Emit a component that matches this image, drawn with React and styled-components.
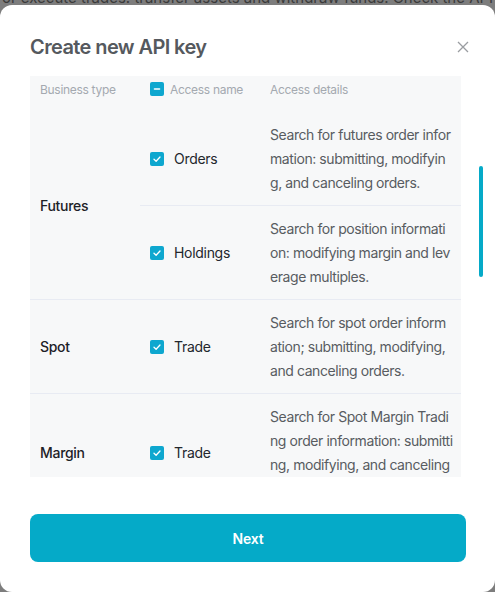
import React from "react";
import styled, { createGlobalStyle } from "styled-components";

const Global = createGlobalStyle`
  html, body { margin: 0; padding: 0; }
  body { font-family: Inter, "Noto Sans", sans-serif; -webkit-font-smoothing: antialiased; }
  * { box-sizing: border-box; }
`;

const Page = styled.div`
  position: relative;
  width: 495px;
  height: 592px;
  overflow: hidden;
  background: #7d7d7d;
`;

const BackdropText = styled.p`
  margin: 0;
  margin-top: -11px;
  padding: 0 0 0 2px;
  white-space: nowrap;
  font-size: 15px;
  line-height: 18px;
  color: #3a3a3a;
`;

const Modal = styled.div`
  position: absolute;
  top: 5px;
  left: 0;
  width: 495px;
  height: 587px;
  background: #fff;
  border-radius: 12px;
  padding: 0 29px 0 30px;
  display: flex;
  flex-direction: column;
`;

const Head = styled.div`
  display: flex;
  align-items: center;
  justify-content: space-between;
  padding-top: 30px;
  height: 54px;
`;

const Title = styled.h2`
  margin: 0;
  font-size: 20px;
  line-height: 24px;
  font-weight: 600;
  color: #55595e;
  letter-spacing: -0.6px;
`;

const Close = styled.button`
  border: 0;
  background: none;
  padding: 0;
  width: 14px;
  height: 14px;
  margin-right: -4px;
  display: flex;
  color: #9a9da1;
`;

const Table = styled.div`
  margin-top: 17px;
  width: 431px;
  height: 401px;
  overflow: hidden;
  background: #f7f8f9;
`;

const HeaderRow = styled.div`
  display: grid;
  grid-template-columns: 110px 120px 1fr;
  height: 36px;
  padding-top: 6px;
  font-size: 12px;
  line-height: 16px;
  letter-spacing: -0.3px;
  color: #a4a9b0;
`;

const HeadCell = styled.div`
  padding-left: 10px;
  display: flex;
  align-items: flex-start;
  gap: 6px;
`;

const Group = styled.div`
  display: grid;
  grid-template-columns: 110px 1fr;
  border-top: ${(p) => (p.$first ? "none" : "1px solid #e8ebf3")};
`;

const TypeCell = styled.div`
  display: flex;
  align-items: center;
  padding-left: 10px;
  font-size: 14px;
  font-weight: 500;
  letter-spacing: -0.3px;
  color: #1d2127;
`;

const SubRow = styled.div`
  display: grid;
  grid-template-columns: 120px 1fr;
  border-top: ${(p) => (p.$first ? "none" : "1px solid #e8ebf3")};
`;

const NameCell = styled.div`
  display: flex;
  align-items: center;
  gap: 10px;
  padding-left: 10px;
  font-size: 14px;
  letter-spacing: -0.3px;
  color: #23272d;
`;

const Detail = styled.div`
  padding: 11px 8px 10px 10px;
  font-size: 14px;
  line-height: 24px;
  letter-spacing: -0.42px;
  color: #585c61;
  word-break: break-all;
`;

const Box = styled.span`
  width: 14px;
  height: 14px;
  border-radius: 2px;
  background: #0ea7cf;
  display: inline-flex;
  align-items: center;
  justify-content: center;
  flex-shrink: 0;
`;

const Scroll = styled.div`
  position: absolute;
  left: 479px;
  top: 166px;
  width: 4px;
  height: 111px;
  border-radius: 2px;
  background: #05aac8;
`;

const NextButton = styled.button`
  margin-top: 37px;
  width: 436px;
  height: 48px;
  border: 0;
  border-radius: 8px;
  background: #05aac8;
  color: #fff;
  font-family: inherit;
  font-size: 14px;
  font-weight: 600;
  letter-spacing: -0.2px;
`;

const Check = () => (
  <Box>
    <svg width="10" height="10" viewBox="0 0 10 10">
      <path d="M2 5.2 L4.1 7.2 L8 3" fill="none" stroke="#fff" strokeWidth="1.3" strokeLinecap="round" strokeLinejoin="round" />
    </svg>
  </Box>
);

const Indeterminate = () => (
  <Box>
    <svg width="10" height="10" viewBox="0 0 10 10">
      <path d="M2.5 5 H7.5" stroke="#fff" strokeWidth="1.6" strokeLinecap="round" />
    </svg>
  </Box>
);

const groups = [
  {
    type: "Futures",
    rows: [
      { name: "Orders", detail: "Search for futures order information: submitting, modifying, and canceling orders." },
      { name: "Holdings", detail: "Search for position information: modifying margin and leverage multiples." },
    ],
  },
  {
    type: "Spot",
    rows: [{ name: "Trade", detail: "Search for spot order information; submitting, modifying, and canceling orders." }],
  },
  {
    type: "Margin",
    rows: [{ name: "Trade", detail: "Search for Spot Margin Trading order information: submitting, modifying, and canceling orders." }],
  },
];

export default function App() {
  return (
    <>
      <Global />
      <Page>
        <BackdropText>or execute trades. transfer assets and withdraw funds. Check the API documentation</BackdropText>
        <Modal>
          <Head>
            <Title>Create new API key</Title>
            <Close aria-label="close">
              <svg width="14" height="14" viewBox="0 0 14 14">
                <path d="M2 2 L12 12 M12 2 L2 12" stroke="currentColor" strokeWidth="1.3" />
              </svg>
            </Close>
          </Head>
          <Table>
            <HeaderRow>
              <HeadCell>Business type</HeadCell>
              <HeadCell>
                <Indeterminate />
                Access name
              </HeadCell>
              <HeadCell>Access details</HeadCell>
            </HeaderRow>
            {groups.map((g, gi) => (
              <Group key={g.type} $first={gi === 0}>
                <TypeCell>{g.type}</TypeCell>
                <div>
                  {g.rows.map((r, ri) => (
                    <SubRow key={r.name} $first={ri === 0}>
                      <NameCell>
                        <Check />
                        {r.name}
                      </NameCell>
                      <Detail>{r.detail}</Detail>
                    </SubRow>
                  ))}
                </div>
              </Group>
            ))}
          </Table>
          <NextButton>Next</NextButton>
        </Modal>
        <Scroll />
      </Page>
    </>
  );
}
